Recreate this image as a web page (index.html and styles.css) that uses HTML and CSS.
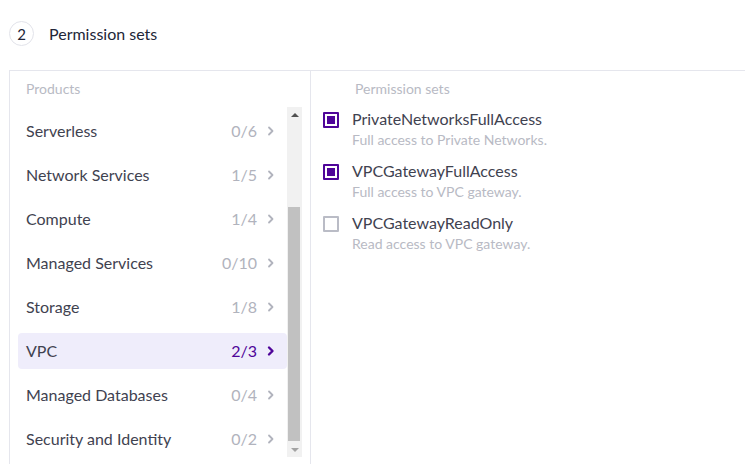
FILE: index.html
```html
<!DOCTYPE html>
<html>
<head>
<meta charset="utf-8">
<link rel="stylesheet" href="styles.css">
</head>
<body>
<div class="step">
  <span class="step-num">2</span>
  <span class="step-title">Permission sets</span>
</div>
<div class="panel">
  <div class="products">
    <div class="col-head">Products</div>
    <div class="list-wrap">
      <div class="list">
        <div class="item"><span class="name">Serverless</span><span class="count">0/6</span><svg class="chev" viewBox="0 0 16 16"><path d="M6 4.5l3.5 3.5-3.5 3.5"/></svg></div>
        <div class="item"><span class="name">Network Services</span><span class="count">1/5</span><svg class="chev" viewBox="0 0 16 16"><path d="M6 4.5l3.5 3.5-3.5 3.5"/></svg></div>
        <div class="item"><span class="name">Compute</span><span class="count">1/4</span><svg class="chev" viewBox="0 0 16 16"><path d="M6 4.5l3.5 3.5-3.5 3.5"/></svg></div>
        <div class="item"><span class="name">Managed Services</span><span class="count">0/10</span><svg class="chev" viewBox="0 0 16 16"><path d="M6 4.5l3.5 3.5-3.5 3.5"/></svg></div>
        <div class="item"><span class="name">Storage</span><span class="count">1/8</span><svg class="chev" viewBox="0 0 16 16"><path d="M6 4.5l3.5 3.5-3.5 3.5"/></svg></div>
        <div class="item active"><span class="name">VPC</span><span class="count">2/3</span><svg class="chev" viewBox="0 0 16 16"><path d="M6 4.5l3.5 3.5-3.5 3.5"/></svg></div>
        <div class="item"><span class="name">Managed Databases</span><span class="count">0/4</span><svg class="chev" viewBox="0 0 16 16"><path d="M6 4.5l3.5 3.5-3.5 3.5"/></svg></div>
        <div class="item"><span class="name">Security and Identity</span><span class="count">0/2</span><svg class="chev" viewBox="0 0 16 16"><path d="M6 4.5l3.5 3.5-3.5 3.5"/></svg></div>
      </div>
      <div class="scrollbar">
        <div class="sb-btn"><span class="tri-up"></span></div>
        <div class="sb-track"><div class="sb-thumb"></div></div>
        <div class="sb-btn"><span class="tri-down"></span></div>
      </div>
    </div>
  </div>
  <div class="perms">
    <div class="col-head">Permission sets</div>
    <div class="perm">
      <span class="box checked"></span>
      <div class="perm-text"><div class="perm-name">PrivateNetworksFullAccess</div><div class="perm-desc">Full access to Private Networks.</div></div>
    </div>
    <div class="perm">
      <span class="box checked"></span>
      <div class="perm-text"><div class="perm-name">VPCGatewayFullAccess</div><div class="perm-desc">Full access to VPC gateway.</div></div>
    </div>
    <div class="perm">
      <span class="box"></span>
      <div class="perm-text"><div class="perm-name">VPCGatewayReadOnly</div><div class="perm-desc">Read access to VPC gateway.</div></div>
    </div>
  </div>
</div>
</body>
</html>
```
FILE: styles.css
```css
* { box-sizing: border-box; }
html, body { margin: 0; padding: 0; background: #fff; overflow: hidden; }
body {
  font-family: Lato, "Liberation Sans", sans-serif;
  color: #3f4250;
  padding: 21px 0 0 9px;
}
.step { display: flex; align-items: center; height: 25px; }
.step-num {
  width: 25px; height: 25px; border-radius: 50%;
  border: 1px solid #e2e3ea;
  display: flex; align-items: center; justify-content: center;
  font-size: 15px; color: #222638;
}
.step-title { margin-left: 15px; font-size: 16px; color: #222638; }
.panel {
  margin-top: 24px;
  display: flex;
  border-top: 1px solid #e5e6ed;
  border-left: 1px solid #e5e6ed;
  height: 394px;
}
.products { width: 301px; border-right: 1px solid #e5e6ed; flex: none; }
.col-head { height: 36px; display: flex; align-items: center; font-size: 14px; color: #b8bac4; padding-left: 16px; padding-bottom: 2px; }
.list-wrap { display: flex; height: 350px; padding-left: 8px; }
.list { width: 269px; overflow: hidden; padding-top: 6px; display: flex; flex-direction: column; gap: 8px; }
.item {
  height: 36px; flex: none; display: flex; align-items: center;
  padding: 0 8px 2px 8px; border-radius: 4px; font-size: 16px;
}
.item .name { flex: 1; color: #3f4250; }
.item .count { color: #b1b3bd; margin-right: 6px; }
.chev { width: 16px; height: 16px; fill: none; stroke: #b1b3bd; stroke-width: 1.8; stroke-linecap: round; stroke-linejoin: round; margin-top: 2px; }
.item.active { background: #efedfb; }
.item.active .count { color: #4f0599; }
.item.active .chev { stroke: #4f0599; stroke-width: 2.4; }
.scrollbar { width: 15px; flex: none; background: #f1f1f1; display: flex; flex-direction: column; }
.sb-btn { height: 15px; display: flex; align-items: center; justify-content: center; flex: none; }
.tri-up { width: 0; height: 0; border-left: 4px solid transparent; border-right: 4px solid transparent; border-bottom: 4px solid #505050; }
.tri-down { width: 0; height: 0; border-left: 4px solid transparent; border-right: 4px solid transparent; border-top: 4px solid #a3a3a3; }
.sb-track { flex: 1; padding-top: 85px; padding-bottom: 1px; }
.sb-thumb { height: 234px; margin: 0 2px 0 1px; background: #c1c1c1; }
.perms { flex: 1; padding-left: 12px; }
.perms .col-head { padding-left: 32px; }
.perm { display: flex; align-items: flex-start; height: 52px; }
.box {
  width: 16px; height: 16px; flex: none; margin-top: 5px;
  border: 2px solid #babcc6; border-radius: 1px; background: #fff;
}
.box.checked { border-color: #4f0599; padding: 2px; }
.box.checked::after { content: ""; display: block; width: 8px; height: 8px; background: #4f0599; }
.perm-text { margin-left: 13px; padding-top: 1px; }
.perm-name { font-size: 16px; color: #3f4250; line-height: 22px; }
.perm-desc { font-size: 14px; color: #b8bac4; line-height: 20px; }
```
